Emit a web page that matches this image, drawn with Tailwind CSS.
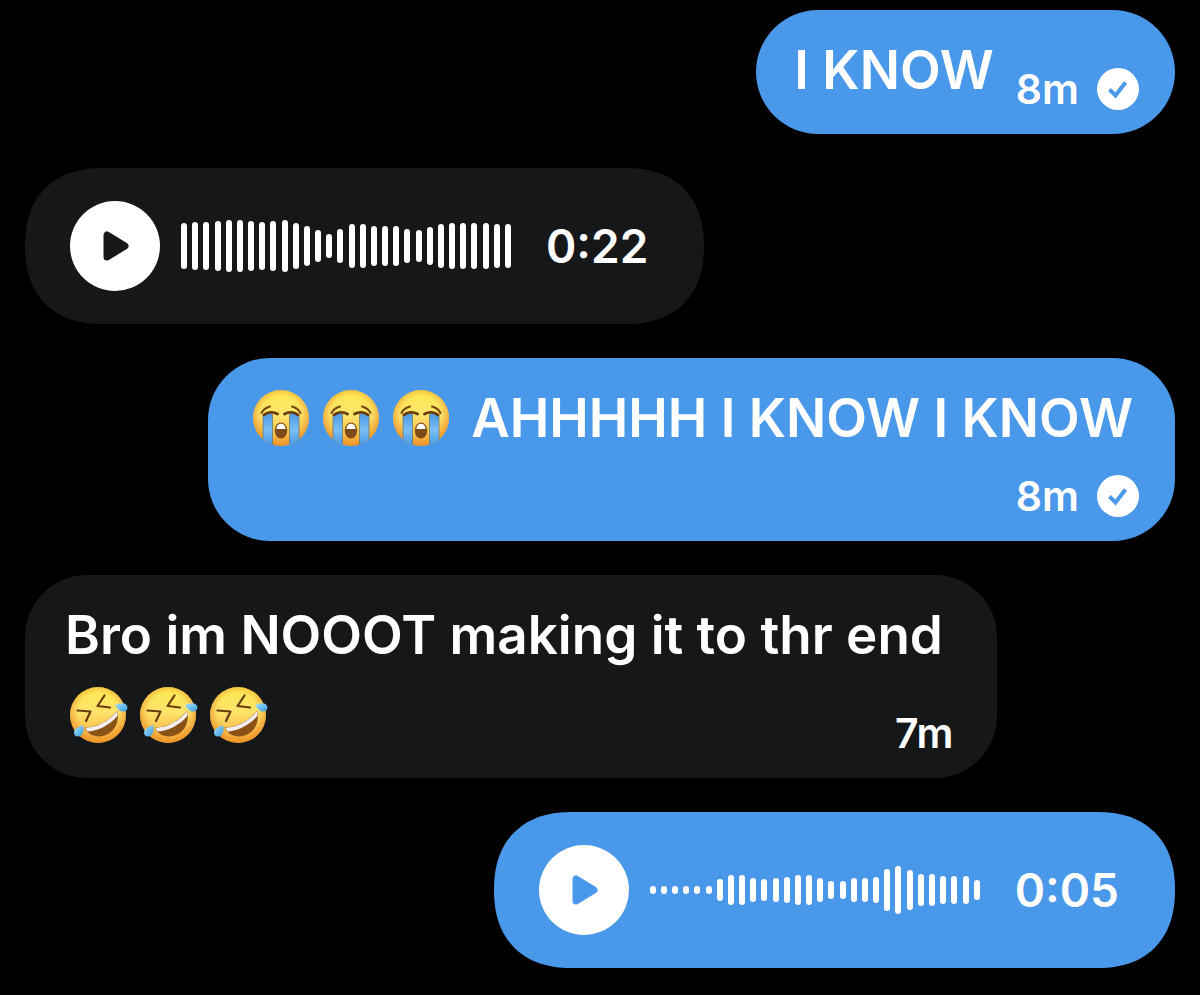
<!DOCTYPE html>
<html lang="en">
<head>
    <meta charset="UTF-8">
    <meta name="viewport" content="width=device-width, initial-scale=1.0">
    <title>Messages</title>

    <!-- Tailwind CSS CDN -->
    <script src="https://cdn.jsdelivr.net/npm/@tailwindcss/browser@4"></script>
</head>
<body class="bg-black text-white font-['Inter','Liberation_Sans',sans-serif] font-semibold">

    <!-- Shared icons -->
    <svg class="absolute w-0 h-0" aria-hidden="true">
        <defs>
            <linearGradient id="face" x1="0" y1="0" x2="0" y2="1">
                <stop offset="0" stop-color="#fcea50"></stop>
                <stop offset="0.45" stop-color="#fde46c"></stop>
                <stop offset="1" stop-color="#f5a836"></stop>
            </linearGradient>
            <radialGradient id="rim" cx="0.5" cy="0.46" r="0.54">
                <stop offset="0.65" stop-color="#f0962a" stop-opacity="0"></stop>
                <stop offset="1" stop-color="#e98a24" stop-opacity="0.75"></stop>
            </radialGradient>
            <linearGradient id="tear" x1="0" y1="0" x2="0" y2="1">
                <stop offset="0" stop-color="#4b9ae6"></stop>
                <stop offset="0.5" stop-color="#7cc0f4"></stop>
                <stop offset="1" stop-color="#3f97e6"></stop>
            </linearGradient>
            <linearGradient id="drop" x1="0" y1="0" x2="1" y2="1">
                <stop offset="0" stop-color="#a5e2fb"></stop>
                <stop offset="1" stop-color="#3b9de0"></stop>
            </linearGradient>
            <clipPath id="head"><circle cx="28" cy="28" r="28"></circle></clipPath>
        </defs>
        <symbol id="sob" viewBox="0 0 56 56">
            <circle cx="28" cy="28" r="28" fill="url(#face)"></circle>
            <circle cx="28" cy="28" r="28" fill="url(#rim)"></circle>
            <g clip-path="url(#head)">
                <path d="M10 24h9.500v32H10zM36.500 24H46v32h-9.500z" fill="url(#tear)"></path>
                <path d="M10 24v32M19.500 24v32M36.500 24v32M46 24v32" stroke="#6f7a72" stroke-width="0.8"></path>
            </g>
            <path d="M11 25c3-3 9-3.500 13.500-1M45 25c-3-3-9-3.500-13.500-1" fill="none" stroke="#6b3d0c" stroke-width="2.800" stroke-linecap="round"></path>
            <path d="M8.500 23c1.500-3 4.500-5.500 8.500-6.500M47.500 23c-1.500-3-4.500-5.500-8.500-6.500" fill="none" stroke="#7a480e" stroke-width="2" stroke-linecap="round"></path>
            <ellipse cx="28" cy="40.500" rx="6.200" ry="8" fill="#7f4a18"></ellipse>
            <path d="M23.500 39c0-7 9-7 9 0z" fill="#fff"></path>
        </symbol>
        <symbol id="rofl" viewBox="0 0 60 58">
            <circle cx="29" cy="29" r="28" fill="url(#face)"></circle>
            <circle cx="29" cy="29" r="28" fill="url(#rim)"></circle>
            <path d="M8.500 24.500l13 1-4.500 9.500M35.500 9.500l-7 10.500 12.500 1.500" fill="none" stroke="#6b3d0c" stroke-width="2.200" stroke-linecap="round" stroke-linejoin="round"></path>
            <path d="M15.300 41.500C27 42 41 34.500 48 24.500c3 10-1.500 20.500-11 24.500-8.500 3.500-17.500.5-21.700-7.500z" fill="#8a5215"></path>
            <path d="M16 41.700C27.500 42 41 34.500 48 25c.5 2 .6 3.500.4 5C41 39 28 45.500 18.500 45.500z" fill="#f3eef0"></path>
            <path d="M46 19.500c4-3.500 12.500-3 12.500 2 0 4.500-6 5-8.500 2.500-1.500-1.500-2.500-3-4-4.500z" fill="url(#drop)"></path>
            <path d="M13.500 39c2.500 4 .5 11.500-4.500 11.500-4.500 0-5-5-2-8 2-1.800 4.500-2 6.500-3.500z" fill="url(#drop)"></path>
        </symbol>
        <symbol id="play" viewBox="0 0 26 30">
            <path d="M4 4v22l18-11z" fill="currentColor" stroke="currentColor" stroke-width="7" stroke-linejoin="round"></path>
        </symbol>
        <symbol id="sent" viewBox="0 0 42 42">
            <circle cx="21" cy="21" r="21" fill="#fff"></circle>
            <path d="M12.500 21.500l6 6 10-13" fill="none" stroke="#4a98ea" stroke-width="4"></path>
        </symbol>
    </svg>

    <main class="flex flex-col gap-[34px] px-[25px] pt-[10px] pb-[26px]">

        <!-- Sent -->
        <div class="self-end flex items-end gap-[22px] bg-[#4a98ea] rounded-[62px] pt-5 pb-5 pl-[38px] pr-9">
            <p class="text-[53px] leading-20 mb-1">I KNOW</p>
            <div class="flex items-center gap-[18px] text-[41px] leading-[50px]">
                <time>8m</time>
                <svg class="size-[42px]" role="img" aria-label="Sent"><use href="#sent"></use></svg>
            </div>
        </div>

        <!-- Received voice message -->
        <div class="self-start flex items-center bg-[#161719] rounded-[78px] [corner-shape:superellipse(1.2)] py-[33px] pl-[45px] pr-14">
            <button type="button" aria-label="Play" class="flex items-center justify-center size-[90px] rounded-full bg-white text-[#161719] pl-0.5">
                <svg class="w-[26px] h-[30px]" aria-hidden="true"><use href="#play"></use></svg>
            </button>
            <div id="wave-received" class="flex items-center justify-between w-[330px] ml-[21px]"></div>
            <time class="text-[46px] leading-[52px] ml-[35px]">0:22</time>
        </div>

        <!-- Sent -->
        <div class="self-end flex flex-col bg-[#4a98ea] rounded-[62px] pt-5 pb-5 pl-[45px] pr-9">
            <p class="flex items-center text-[53px] leading-20 pr-[6px]">
                <span class="flex gap-[14px] mr-[22px]">
                    <svg class="size-14" role="img" aria-label="😭"><use href="#sob"></use></svg>
                    <svg class="size-14" role="img" aria-label="😭"><use href="#sob"></use></svg>
                    <svg class="size-14" role="img" aria-label="😭"><use href="#sob"></use></svg>
                </span>
                AHHHHH I KNOW I KNOW
            </p>
            <div class="self-end flex items-center gap-[18px] text-[41px] leading-[50px] mt-[13px]">
                <time>8m</time>
                <svg class="size-[42px]" role="img" aria-label="Sent"><use href="#sent"></use></svg>
            </div>
        </div>

        <!-- Received -->
        <div class="self-start flex items-end bg-[#161719] rounded-[62px] pt-5 pb-5 pl-10 pr-11">
            <div class="text-[53px] leading-20 mb-[3px]">
                <p>Bro im NOOOT making it to thr end</p>
                <p class="flex items-center gap-[10px] h-20 pl-1">
                    <svg class="w-[60px] h-[58px]" role="img" aria-label="🤣"><use href="#rofl"></use></svg>
                    <svg class="w-[60px] h-[58px]" role="img" aria-label="🤣"><use href="#rofl"></use></svg>
                    <svg class="w-[60px] h-[58px]" role="img" aria-label="🤣"><use href="#rofl"></use></svg>
                </p>
            </div>
            <time class="text-[41px] leading-[50px] -ml-12">7m</time>
        </div>

        <!-- Sent voice message -->
        <div class="self-end flex items-center bg-[#4a98ea] rounded-[78px] [corner-shape:superellipse(1.2)] py-[33px] pl-[45px] pr-14">
            <button type="button" aria-label="Play" class="flex items-center justify-center size-[90px] rounded-full bg-white text-[#4a98ea] pl-0.5">
                <svg class="w-[26px] h-[30px]" aria-hidden="true"><use href="#play"></use></svg>
            </button>
            <div id="wave-sent" class="flex items-center justify-between w-[330px] ml-[21px]"></div>
            <time class="text-[46px] leading-[52px] ml-[35px]">0:05</time>
        </div>
    </main>

    <script>
        // Bar heights of each recording
        const waves = {
            'wave-received': [46, 48, 48, 50, 52, 52, 50, 48, 50, 52, 46, 40, 32, 24, 34, 44, 44, 40, 40, 40, 34, 32, 38, 44, 46, 46, 46, 46, 44, 44],
            'wave-sent': [8, 8, 8, 8, 8, 8, 22, 30, 30, 24, 22, 24, 26, 30, 30, 24, 18, 18, 24, 24, 26, 42, 48, 40, 32, 32, 28, 28, 28, 20]
        };

        Object.keys(waves).forEach(id => {
            const wave = document.getElementById(id);
            waves[id].forEach(height => {
                const bar = document.createElement('span');
                bar.className = 'w-1.5 rounded-full bg-white';
                bar.style.height = `${height}px`;
                wave.appendChild(bar);
            });
        });
    </script>
</body>
</html>
